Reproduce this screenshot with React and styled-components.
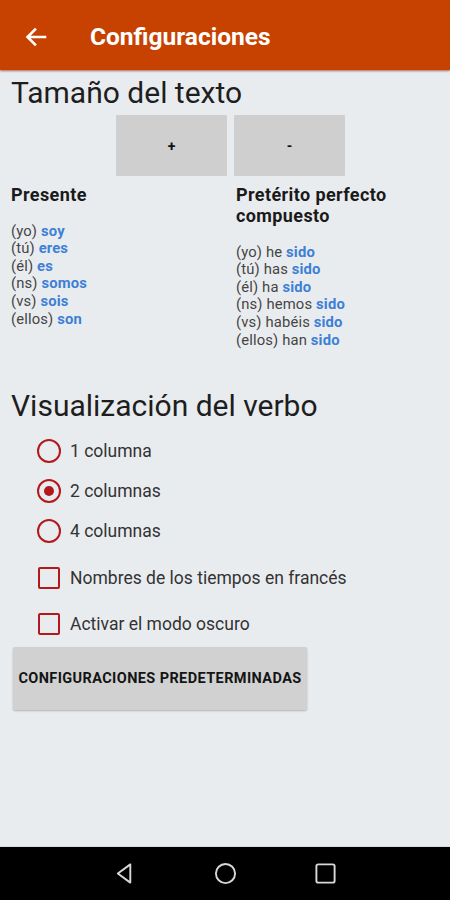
import React from "react";
import styled, { createGlobalStyle } from "styled-components";

const GlobalStyle = createGlobalStyle`
  html, body {
    margin: 0;
    padding: 0;
    background: #e9ecef;
    font-family: Roboto, "Liberation Sans", sans-serif;
  }
`;

const presente = [
  ["(yo)", "soy"],
  ["(tú)", "eres"],
  ["(él)", "es"],
  ["(ns)", "somos"],
  ["(vs)", "sois"],
  ["(ellos)", "son"],
];

const compuesto = [
  ["(yo) he", "sido"],
  ["(tú) has", "sido"],
  ["(él) ha", "sido"],
  ["(ns) hemos", "sido"],
  ["(vs) habéis", "sido"],
  ["(ellos) han", "sido"],
];

const columnas = ["1 columna", "2 columnas", "4 columnas"];
const opciones = ["Nombres de los tiempos en francés", "Activar el modo oscuro"];

const App = () => {
  return (
    <Screen>
      <GlobalStyle />
      <AppBar>
        <BackIcon viewBox="0 0 24 24">
          <path d="M21 12H4M11 4.5L3.5 12 11 19.5" />
        </BackIcon>
        <AppTitle>Configuraciones</AppTitle>
      </AppBar>

      <Content>
        <SectionTitle>Tamaño del texto</SectionTitle>
        <SizeButtons>
          <SizeButton>+</SizeButton>
          <SizeButton>-</SizeButton>
        </SizeButtons>

        <Columns>
          <Tense>
            <TenseTitle>Presente</TenseTitle>
            <ConjList>
              {presente.map(([p, v]) => (
                <ConjLine key={p}>
                  {p} <Verb>{v}</Verb>
                </ConjLine>
              ))}
            </ConjList>
          </Tense>
          <Tense>
            <TenseTitle>
              Pretérito perfecto
              <br />
              compuesto
            </TenseTitle>
            <ConjList>
              {compuesto.map(([p, v]) => (
                <ConjLine key={p}>
                  {p} <Verb>{v}</Verb>
                </ConjLine>
              ))}
            </ConjList>
          </Tense>
        </Columns>

        <SectionTitle $top={41}>Visualización del verbo</SectionTitle>
        <OptionGroup $top={9}>
          {columnas.map((c, i) => (
            <OptionRow key={c} $height={40}>
              <Radio $checked={i === 1} />
              <OptionLabel>{c}</OptionLabel>
            </OptionRow>
          ))}
        </OptionGroup>
        <OptionGroup $top={3.5}>
          {opciones.map((o) => (
            <OptionRow key={o} $height={46}>
              <Check />
              <OptionLabel>{o}</OptionLabel>
            </OptionRow>
          ))}
        </OptionGroup>
        <ResetButton>CONFIGURACIONES PREDETERMINADAS</ResetButton>
      </Content>

      <NavBar>
        <NavIcon viewBox="0 0 24 24">
          <path d="M17 2.5V21.5L4 12Z" />
        </NavIcon>
        <NavIcon viewBox="0 0 24 24">
          <circle cx="12" cy="12" r="10" />
        </NavIcon>
        <NavIcon viewBox="0 0 24 24">
          <rect x="2.5" y="2.5" width="19" height="19" rx="2" />
        </NavIcon>
      </NavBar>
    </Screen>
  );
};

export default App;

const Screen = styled.div`
  display: flex;
  flex-direction: column;
  height: 900px;
  width: 450px;
  overflow: hidden;
`;

const AppBar = styled.header`
  box-sizing: border-box;
  height: 70px;
  padding-top: 3px;
  flex-shrink: 0;
  display: flex;
  align-items: center;
  background: #c74200;
  box-shadow: 0 1px 2px rgba(120, 20, 0, 0.6);
  position: relative;
  z-index: 1;
`;

const BackIcon = styled.svg`
  width: 24px;
  height: 24px;
  margin-left: 24px;
  fill: none;
  stroke: #fff;
  stroke-width: 2.6;
  stroke-linecap: square;
`;

const AppTitle = styled.h1`
  margin: 0 0 0 42px;
  color: #fff;
  font-size: 24.5px;
  font-weight: 700;
`;

const Content = styled.main`
  flex: 1;
  display: flex;
  flex-direction: column;
  border-bottom: 1px solid #d6d9dd;
`;

const SectionTitle = styled.h2`
  margin: ${(p) => (p.$top ? `${p.$top}px` : "7px")} 0 0 11px;
  font-size: 30px;
  line-height: 32px;
  font-weight: 400;
  color: #1e1e1e;
`;

const SizeButtons = styled.div`
  display: flex;
  gap: 7px;
  margin: 6px 0 0 116px;
`;

const SizeButton = styled.button`
  width: 111px;
  height: 61px;
  border: none;
  border-radius: 1px;
  background: #cfcfcf;
  font-family: Roboto, "Liberation Sans", sans-serif;
  font-size: 14px;
  font-weight: 700;
  color: #111;
  padding: 0;
`;

const Columns = styled.div`
  display: grid;
  grid-template-columns: 225px 1fr;
  margin: 8px 0 0 11px;
`;

const Tense = styled.div`
  display: flex;
  flex-direction: column;
`;

const TenseTitle = styled.div`
  font-size: 18px;
  line-height: 21px;
  letter-spacing: 0.4px;
  font-weight: 700;
  color: #1a1a1a;
`;

const ConjList = styled.div`
  margin-top: 17.6px;
`;

const ConjLine = styled.div`
  font-size: 14.8px;
  line-height: 17.6px;
  letter-spacing: 0.15px;
  color: #454545;
`;

const Verb = styled.span`
  color: #3d80d6;
  font-weight: 700;
`;

const OptionGroup = styled.div`
  display: flex;
  flex-direction: column;
  margin: ${(p) => p.$top}px 0 0 37px;
`;

const OptionRow = styled.div`
  display: flex;
  align-items: center;
  height: ${(p) => p.$height}px;
  gap: 9px;
`;

const Radio = styled.span`
  box-sizing: border-box;
  width: 24px;
  height: 24px;
  border-radius: 50%;
  border: 2.5px solid #b3191c;
  display: flex;
  align-items: center;
  justify-content: center;
  &::after {
    content: "";
    width: 10px;
    height: 10px;
    border-radius: 50%;
    background: #b3191c;
    display: ${(p) => (p.$checked ? "block" : "none")};
  }
`;

const Check = styled.span`
  box-sizing: border-box;
  width: 22px;
  height: 22px;
  margin: 0 1px;
  border-radius: 2px;
  border: 2.5px solid #b3191c;
`;

const OptionLabel = styled.span`
  font-size: 17.5px;
  color: #333;
`;

const ResetButton = styled.button`
  align-self: flex-start;
  width: 294px;
  height: 63px;
  margin: 0 0 0 13px;
  border: none;
  border-radius: 2px;
  background: #d1d1d1;
  box-shadow: 0 1px 2px rgba(0, 0, 0, 0.25);
  font-family: Roboto, "Liberation Sans", sans-serif;
  font-size: 14.5px;
  letter-spacing: 0.4px;
  font-weight: 700;
  color: #141414;
  padding: 0;
  white-space: nowrap;
`;

const NavBar = styled.nav`
  height: 53px;
  flex-shrink: 0;
  background: #000;
  display: flex;
  align-items: center;
  justify-content: center;
  gap: 77px;
`;

const NavIcon = styled.svg`
  width: 23px;
  height: 23px;
  fill: none;
  stroke: #d8d8d8;
  stroke-width: 2;
  stroke-linejoin: round;
`;
